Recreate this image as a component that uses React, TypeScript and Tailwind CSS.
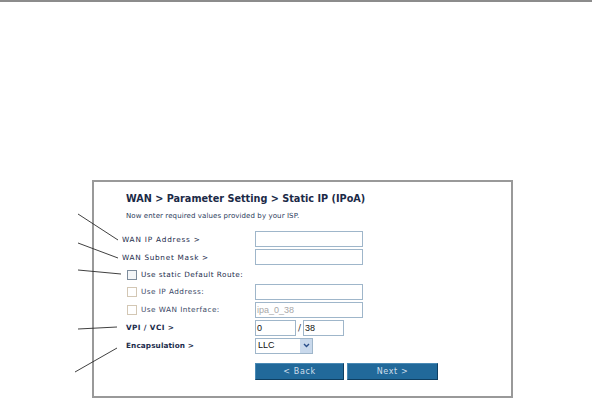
import React from 'react';

const font = { fontFamily: '"DejaVu Sans", Verdana, sans-serif' };

function Field({ value, width = 'w-[108px]', muted }: { value?: string; width?: string; muted?: boolean }) {
  return (
    <div
      className={`${width} h-[16px] border border-[#9fb6ca] bg-white flex items-center pl-[1px] text-[9px] leading-none ${
        muted ? 'text-[#a8a8a8]' : 'text-[#111]'
      }`}
      style={{ fontFamily: '"Liberation Sans", Arial, sans-serif' }}
    >
      {value}
    </div>
  );
}

function Check({ disabled }: { disabled?: boolean }) {
  return (
    <span
      className={`inline-block w-[10px] h-[10px] border ${
        disabled ? 'border-[#d3c7b4] bg-white' : 'border-[#7d8c9c] bg-[#f4f6f8]'
      }`}
    />
  );
}

export default function App() {
  return (
    <div className="relative w-[592px] h-[398px] bg-white overflow-hidden" style={font}>
      <div className="h-[2px] bg-[#8c8c8c]" />

      <div className="mt-[178px] ml-[92px] w-[421px] h-[218px] border-2 border-[#999] pl-[32px] pt-[11px] text-[#1c2c4c]">
        {/* Header */}
        <div className="text-[9.7px] leading-[12px] font-bold text-[#1b2a47]">
          WAN &gt; Parameter Setting &gt; Static IP (IPoA)
        </div>
        <div className="mt-[6px] text-[7px] leading-[10px] tracking-[0.1px] text-[#2a3a5a]">
          Now enter required values provided by your ISP.
        </div>

        {/* Form rows */}
        <div className="mt-[10px] flex flex-col text-[7.3px] leading-none">
          <div className="h-[18px] flex items-start">
            <div className="w-[129px] -ml-[4px] pt-[5px] tracking-[0.8px]">WAN IP Address &gt;</div>
            <div className="ml-[4px]"><Field /></div>
          </div>
          <div className="h-[17px] flex items-start">
            <div className="w-[129px] -ml-[4px] pt-[5px] tracking-[0.7px]">WAN Subnet Mask &gt;</div>
            <div className="ml-[4px]"><Field /></div>
          </div>
          <div className="h-[17px] flex items-center">
            <div className="w-[129px] flex items-center gap-[4px] pl-[1px]">
              <Check />
              <span className="tracking-[0.45px] whitespace-nowrap">Use static Default Route:</span>
            </div>
          </div>
          <div className="h-[18px] flex items-center">
            <div className="w-[129px] flex items-center gap-[4px] pl-[1px] text-[#3b4866]">
              <Check disabled />
              <span className="tracking-[0.45px]">Use IP Address:</span>
            </div>
            <Field />
          </div>
          <div className="h-[18px] flex items-center">
            <div className="w-[129px] flex items-center gap-[4px] pl-[1px] text-[#3b4866]">
              <Check disabled />
              <span className="tracking-[0.45px]">Use WAN Interface:</span>
            </div>
            <Field value="ipa_0_38" muted />
          </div>
          <div className="h-[18px] flex items-center">
            <div className="w-[129px] font-bold tracking-[0.4px]">VPI / VCI &gt;</div>
            <Field value="0" width="w-[41px]" />
            <span className="w-[7px] text-center text-[9px] text-[#333]">/</span>
            <Field value="38" width="w-[41px]" />
          </div>
          <div className="h-[17px] flex items-center">
            <div className="w-[129px] font-bold tracking-[0.1px]">Encapsulation &gt;</div>
            <div
              className="w-[58px] h-[16px] border border-[#9fb6ca] bg-white flex items-center text-[9px] text-[#111]"
              style={{ fontFamily: '"Liberation Sans", Arial, sans-serif' }}
            >
              <span className="flex-1 pl-[2px]">LLC</span>
              <span className="w-[12px] h-[14px] bg-[#c9d9ec] flex items-center justify-center">
                <svg width="7" height="5" viewBox="0 0 7 5">
                  <path d="M1 1 L3.5 3.5 L6 1" fill="none" stroke="#2b4f8a" strokeWidth="1.4" />
                </svg>
              </span>
            </div>
          </div>

          {/* Buttons */}
          <div className="mt-[9px] flex gap-[3px] pl-[129px]">
            <button className="w-[89px] h-[17px] bg-[#21699a] border border-[#4a8ab5] border-b-[#0e3f62] border-r-[#0e3f62] text-[#cfdfec] text-[8px] tracking-[0.6px]">
              &lt; Back
            </button>
            <button className="w-[91px] h-[17px] bg-[#21699a] border border-[#4a8ab5] border-b-[#0e3f62] border-r-[#0e3f62] text-[#cfdfec] text-[8px] tracking-[0.6px]">
              Next &gt;
            </button>
          </div>
        </div>
      </div>

      {/* Callout leader lines */}
      <svg className="absolute inset-0 pointer-events-none" width="592" height="398">
        <g stroke="#2a2a2a" strokeWidth="0.9" fill="none">
          <line x1="78" y1="214" x2="118" y2="240" />
          <line x1="78" y1="243" x2="118" y2="258" />
          <line x1="78" y1="270" x2="121" y2="274" />
          <line x1="78" y1="329" x2="117" y2="327" />
          <line x1="75" y1="372" x2="117" y2="348" />
        </g>
      </svg>
    </div>
  );
}
